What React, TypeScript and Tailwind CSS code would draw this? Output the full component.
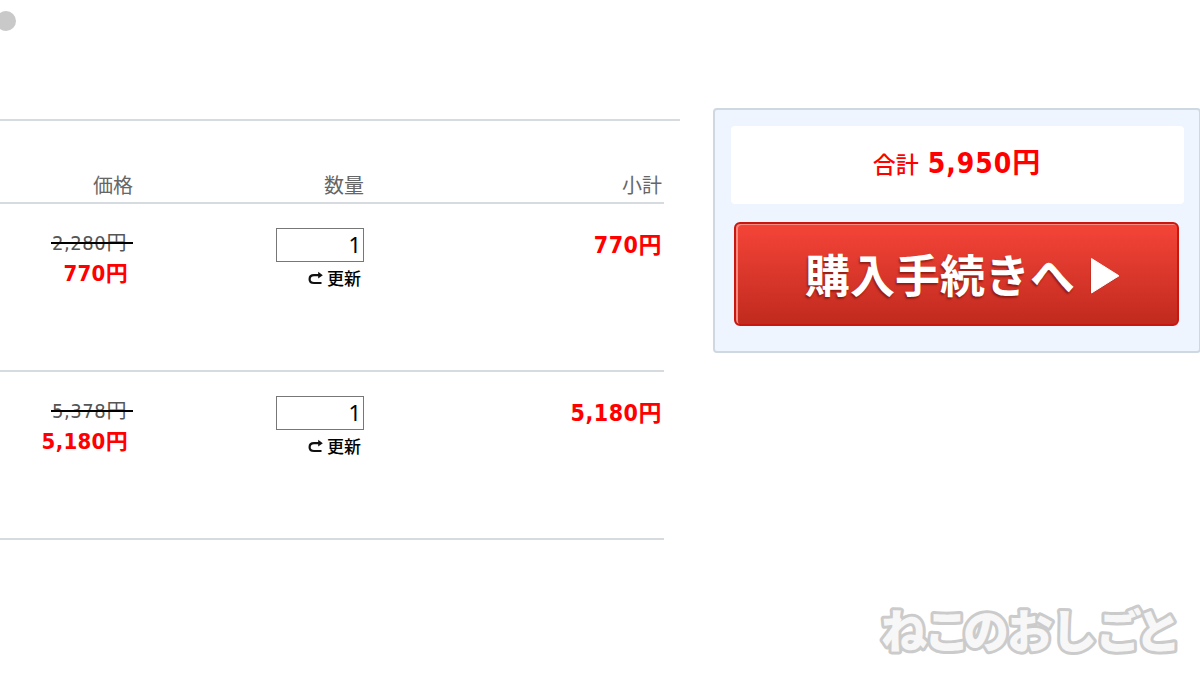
type CartItem = {
  id: number
  listPrice: string
  price: string
  quantity: number
  subtotal: string
}

const items: CartItem[] = [
  { id: 1, listPrice: "2,280", price: "770", quantity: 1, subtotal: "770" },
  { id: 2, listPrice: "5,378", price: "5,180", quantity: 1, subtotal: "5,180" },
]

function Yen({ amount, className = "" }: { amount: string; className?: string }) {
  return (
    <span className={`flex items-baseline justify-end leading-none ${className}`}>
      <span className="font-['DejaVu_Sans_Condensed','DejaVu_Sans',sans-serif] [font-stretch:condensed]">{amount}</span>
      <span>円</span>
    </span>
  )
}

function RefreshIcon() {
  return (
    <svg width="16" height="14" viewBox="0 0 16 14" fill="none">
      <path d="M13.500 12H6C3.200 12 1.600 10.500 1.600 8.200S3.200 4.200 6 4.200h5" stroke="#111" strokeWidth="2.200" />
      <path d="M10.200.8v6.800l4.600-3.400z" fill="#111" />
    </svg>
  )
}

function CartRow({ item }: { item: CartItem }) {
  return (
    <div className="flex h-[168px] w-[664px] border-b-2 border-[#d5dbdf]">
      <div className="flex w-[133px] flex-col items-end pt-[28px]">
        <div className="relative pr-[6px] text-[20px] text-[#555]">
          <Yen amount={item.listPrice} className="tracking-[0.6px]" />
          <span className="absolute -left-[1px] right-0 top-[10px] h-[2px] bg-black" />
        </div>
        <Yen amount={item.price} className="mt-[7px] pr-[5px] text-[22px] font-bold tracking-[0.3px] text-[#f00]" />
      </div>
      <div className="flex w-[231px] flex-col items-end pt-[24px]">
        <input
          readOnly
          value={item.quantity}
          className="h-[34px] w-[88px] border border-[#777] bg-white pr-[2px] pb-[2px] text-right font-['Noto_Sans',sans-serif] text-[22px] text-black outline-none"
        />
        <button className="mt-[7px] flex items-center gap-[3px] pr-[3px] text-[17px] leading-[17px] font-medium text-black">
          <RefreshIcon />
          更新
        </button>
      </div>
      <div className="flex flex-1 justify-end pt-[28px]">
        <Yen amount={item.subtotal} className="h-[22px] pr-[2px] text-[23px] font-bold tracking-[0.5px] text-[#f00]" />
      </div>
    </div>
  )
}

function CartTable() {
  return (
    <section className="w-[680px] shrink-0">
      <div className="h-[119px] pt-[11px]">
        <div className="-ml-[4px] h-[20px] w-[20px] rounded-full bg-[#c9c9c9]" />
      </div>
      <div className="border-t-2 border-[#d5dbdf]">
        <div className="flex h-[83px] w-[664px] border-b-2 border-[#d5dbdf] pt-[53px] text-right text-[20px] leading-[22px] text-[#666]">
          <div className="w-[133px]">価格</div>
          <div className="w-[231px]">数量</div>
          <div className="flex-1 pr-[2px]">小計</div>
        </div>
        {items.map((item) => (
          <CartRow key={item.id} item={item} />
        ))}
      </div>
    </section>
  )
}

function Summary() {
  return (
    <aside className="ml-[33px] mt-[108px] h-[245px] w-[488px] shrink-0 rounded-[4px] border-2 border-[#cfd8e0] bg-[#eef5ff] pt-[16px]">
      <div className="ml-[16px] flex h-[78px] w-[453px] items-baseline justify-center rounded-[4px] bg-white pt-[20px] pr-[1px] text-[#f00]">
        <span className="mr-[9px] text-[23px] font-medium">合計</span>
        <Yen amount="5,950" className="text-[28px] font-bold tracking-[1px]" />
      </div>
      <button className="ml-[19px] mt-[18px] flex h-[104px] w-[445px] items-center rounded-[6px] border-2 border-[#c9170f] bg-linear-to-b from-[#f54438] to-[#c12a1e] pl-[69px] shadow-[inset_2px_1px_0_#f58a80]">
        <span className="text-[45px] leading-[50px] font-bold whitespace-nowrap text-white [text-shadow:-1px_2px_2px_rgba(90,10,0,0.55)]">
          購入手続きへ
        </span>
        <svg className="ml-[15px] mt-[3px]" width="30" height="38" viewBox="0 0 30 38">
          <path d="M.5 3v34l27-16z" fill="#8d1c12" opacity="0.5" />
          <path d="M1.500 1.500v34.500L29 18.800z" fill="#fff" stroke="#fff" strokeLinejoin="round" />
        </svg>
      </button>
    </aside>
  )
}

function Logo() {
  return (
    <svg className="absolute bottom-0 right-0" width="340" height="85" viewBox="0 0 340 85">
      <text
        x="21 64 103 147 191 236 275"
        y="58"
        className="font-['Noto_Sans_CJK_JP',sans-serif] text-[46px] font-black"
        fill="#f7f7f7"
        stroke="#cbcbcb"
        strokeWidth="6"
        strokeLinejoin="round"
        paintOrder="stroke"
      >
        ねこのおしごと
      </text>
    </svg>
  )
}

export default function App() {
  return (
    <main className="relative flex h-[675px] w-[1200px] items-start overflow-hidden bg-white font-['Noto_Sans_CJK_JP',sans-serif]">
      <CartTable />
      <Summary />
      <Logo />
    </main>
  )
}
